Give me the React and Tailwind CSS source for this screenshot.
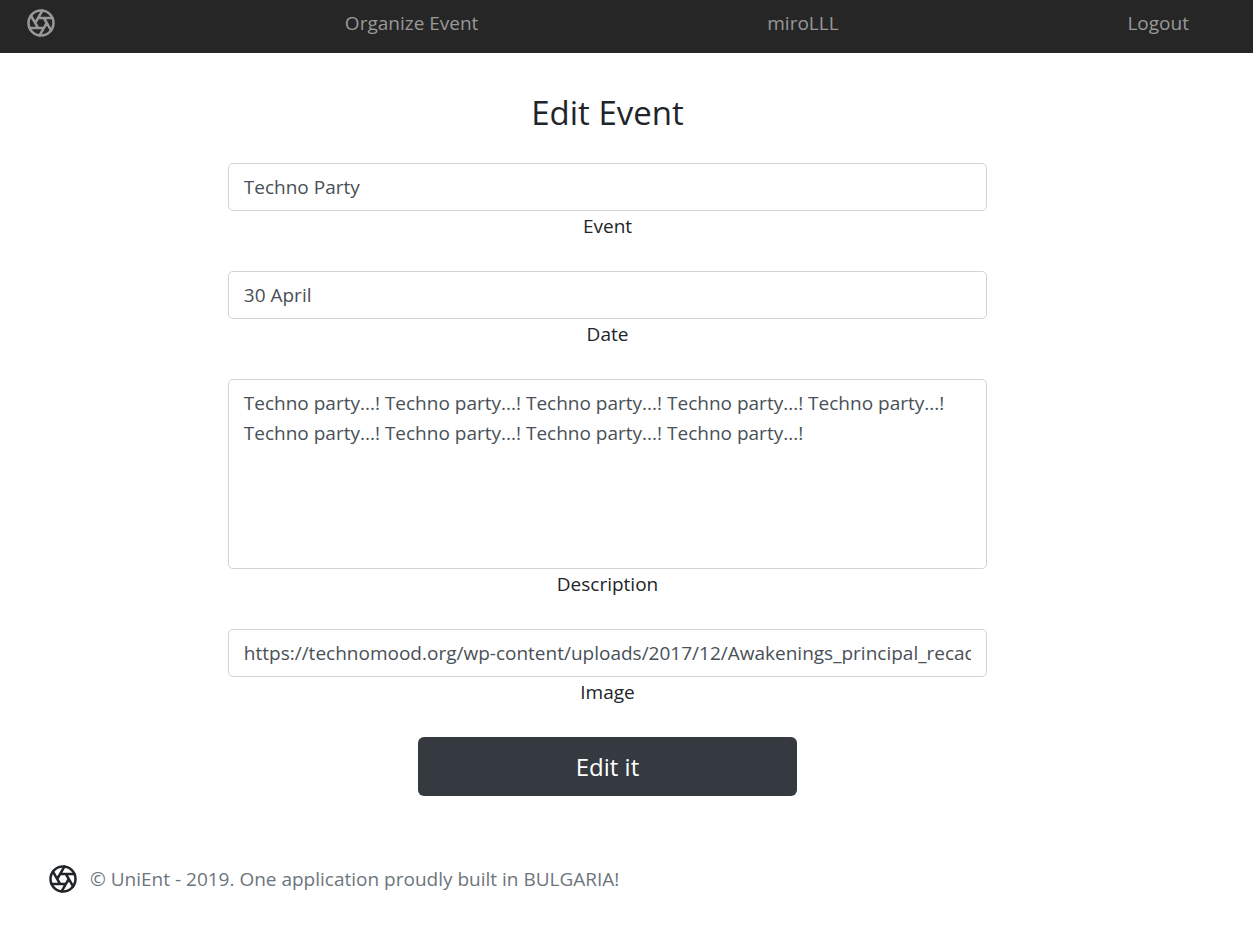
import React from "react";

function ApertureIcon({ label }) {
  return (
    <svg
      role="img"
      aria-label={label}
      className="block size-[30px] shrink-0"
      viewBox="0 0 24 24"
      fill="none"
      stroke="currentColor"
      strokeWidth="2"
      strokeLinecap="round"
      strokeLinejoin="round"
    >
      <circle cx="12" cy="12" r="10" />
      <path d="M14.31 8l5.74 9.94M9.69 8h11.48M7.38 12l5.74-9.94M9.69 16L3.95 6.06M14.31 16H2.83M16.62 12l-5.74 9.94" />
    </svg>
  );
}

const controlClass =
  "block w-full rounded-[5px] border border-[#ced4da] bg-white px-[15px] text-[19px] leading-[30px] text-[#495057] outline-none focus:border-[#80bdff]";

function Field({ id, label, children }) {
  return (
    <div className="flex w-full flex-col items-center">
      {children}
      <label htmlFor={id} className="leading-[30px]">
        {label}
      </label>
    </div>
  );
}

export default function App() {
  return (
    <div className="min-h-screen bg-white font-['Open_Sans','Noto_Sans',sans-serif] text-[19px] text-[#212529]">
      <header className="bg-[#262626] text-[#999999]">
        <nav className="flex items-center justify-between pt-2 pr-16 pb-[15px] pl-[26px] leading-[30px]">
          <a href="#home" className="hover:text-white">
            <ApertureIcon label="Home" />
          </a>
          <a href="#organize" className="hover:text-white">Organize Event</a>
          <a href="#profile" className="hover:text-white">miroLLL</a>
          <a href="#logout" className="hover:text-white">Logout</a>
        </nav>
      </header>

      <main className="pt-10 pr-[38px]">
        <form
          className="mx-auto flex w-5/8 flex-col items-center gap-[30px]"
          onSubmit={(e) => e.preventDefault()}
        >
          <h1 className="text-[33px] leading-[40px]">Edit Event</h1>
          <Field id="event" label="Event">
            <input id="event" type="text" defaultValue="Techno Party" className={`${controlClass} h-12`} />
          </Field>
          <Field id="date" label="Date">
            <input id="date" type="text" defaultValue="30 April" className={`${controlClass} h-12`} />
          </Field>
          <Field id="description" label="Description">
            <textarea
              id="description"
              defaultValue="Techno party...! Techno party...! Techno party...! Techno party...! Techno party...! Techno party...! Techno party...! Techno party...! Techno party...!"
              className={`${controlClass} h-[190px] resize-none py-2`}
            />
          </Field>
          <Field id="image" label="Image">
            <input
              id="image"
              type="text"
              defaultValue="https://technomood.org/wp-content/uploads/2017/12/Awakenings_principal_recados.jpg"
              className={`${controlClass} h-12`}
            />
          </Field>
          <button
            type="submit"
            className="h-[59px] w-1/2 rounded-md bg-[#343a40] text-2xl text-white hover:bg-[#23272b]"
          >
            Edit it
          </button>
        </form>
      </main>

      <footer className="flex items-center gap-3 px-12 pt-[68px] pb-5 leading-[30px] text-[#6c757d]">
        <span className="text-[#212529]">
          <ApertureIcon label="UniEnt" />
        </span>
        <small className="text-[19px] leading-[30px]">
          © UniEnt - 2019. One application proudly built in BULGARIA!
        </small>
      </footer>
    </div>
  );
}
